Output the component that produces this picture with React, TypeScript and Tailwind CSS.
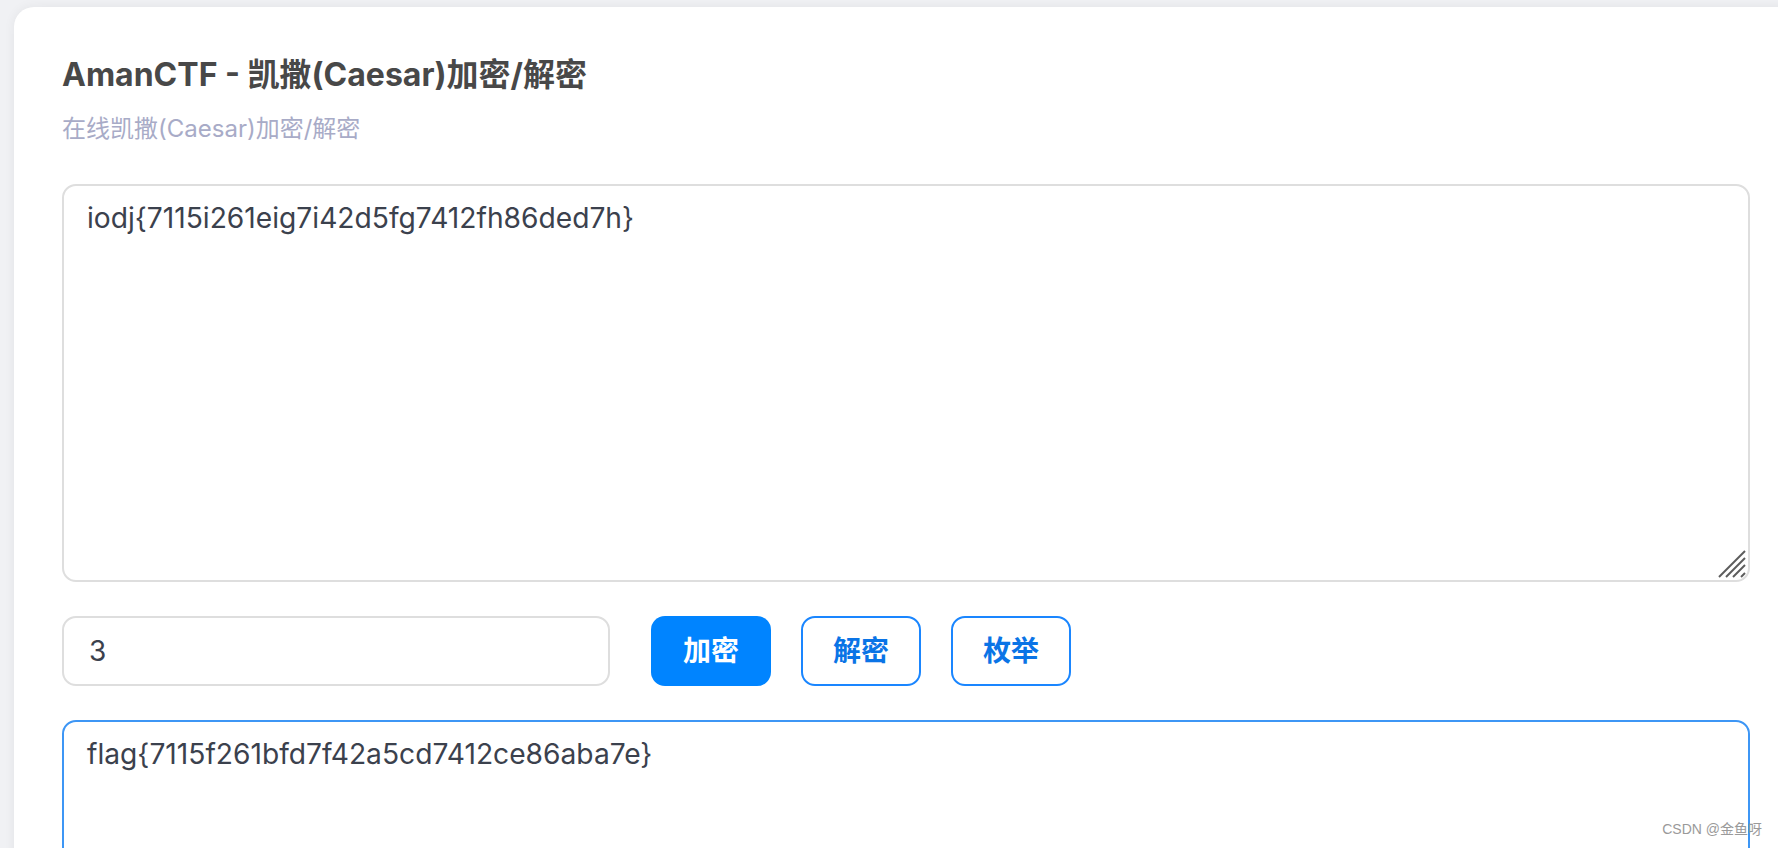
import { useState } from 'react';

const FONT = '"Inter", "Noto Sans CJK SC", sans-serif';

export default function App() {
  const [input, setInput] = useState('iodj{7115i261eig7i42d5fg7412fh86ded7h}');
  const [shift, setShift] = useState('3');
  const [output, setOutput] = useState('flag{7115f261bfd7f42a5cd7412ce86aba7e}');

  function caesar(text: string, n: number) {
    return text.replace(/[a-z]/gi, (c) => {
      const base = c <= 'Z' ? 65 : 97;
      return String.fromCharCode(((((c.charCodeAt(0) - base + n) % 26) + 26) % 26) + base);
    });
  }

  const k = parseInt(shift, 10) || 0;

  return (
    <div
      className="relative w-full h-[848px] overflow-hidden bg-[#f0f1f4] pt-[7px] pl-[14px]"
      style={{ fontFamily: FONT }}
    >
      <div className="w-[1784px] h-[900px] bg-white rounded-tl-[20px] shadow-[0_0_12px_rgba(0,0,0,0.06)] pt-[44px] px-[48px]">
        <h1 className="text-[32px] leading-[47px] font-bold text-[#484848]">
          AmanCTF - 凯撒(Caesar)加密/解密
        </h1>
        <p className="mt-[12px] text-[24px] leading-[37px] text-[#a8abc7]">
          在线凯撒(Caesar)加密/解密
        </p>

        <div className="relative mt-[37px]">
          <textarea
            value={input}
            onChange={(e) => setInput(e.target.value)}
            className="block w-full h-[398px] resize-none rounded-[14px] border-2 border-[#dedede] bg-white pt-[11px] px-[23px] text-[28.2px] leading-[42px] text-[#3b414d] outline-none"
          />
          <svg
            className="absolute right-[4px] bottom-[4px] w-[28px] h-[28px] pointer-events-none"
            viewBox="0 0 28 28"
          >
            <g stroke="#5c5c5c" strokeWidth="2">
              <line x1="1" y1="27" x2="27" y2="1" />
              <line x1="8" y1="27" x2="27" y2="8" />
              <line x1="15" y1="27" x2="27" y2="15" />
              <line x1="23" y1="27" x2="27" y2="23" />
            </g>
          </svg>
        </div>

        <div className="flex items-center mt-[34px]">
          <input
            value={shift}
            onChange={(e) => setShift(e.target.value)}
            className="w-[548px] h-[70px] rounded-[14px] border-2 border-[#dedede] px-[25px] text-[28px] text-[#3b414d] outline-none"
          />
          <div className="flex gap-[30px] ml-[41px]">
            <button
              onClick={() => setOutput(caesar(input, k))}
              className="w-[120px] h-[70px] rounded-[14px] bg-[#0084ff] text-white text-[28px] font-bold"
            >
              加密
            </button>
            <button
              onClick={() => setOutput(caesar(input, -k))}
              className="w-[120px] h-[70px] rounded-[14px] border-2 border-[#1a86ff] bg-white text-[#0a74e6] text-[28px] font-bold"
            >
              解密
            </button>
            <button
              onClick={() => setOutput(caesar(input, -k))}
              className="w-[120px] h-[70px] rounded-[14px] border-2 border-[#1a86ff] bg-white text-[#0a74e6] text-[28px] font-bold"
            >
              枚举
            </button>
          </div>
        </div>

        <textarea
          value={output}
          onChange={(e) => setOutput(e.target.value)}
          className="block mt-[34px] w-full h-[398px] resize-none rounded-[14px] border-2 border-[#3d96f5] bg-white pt-[11px] px-[23px] text-[28.2px] leading-[42px] text-[#3b414d] outline-none"
        />
      </div>

      <span
        className="absolute right-[16px] bottom-[8px] text-[14px] text-[#9a9a9a]"
        style={{ fontFamily: '"Liberation Sans", "Noto Sans CJK SC", sans-serif' }}
      >
        CSDN @金鱼呀
      </span>
    </div>
  );
}
